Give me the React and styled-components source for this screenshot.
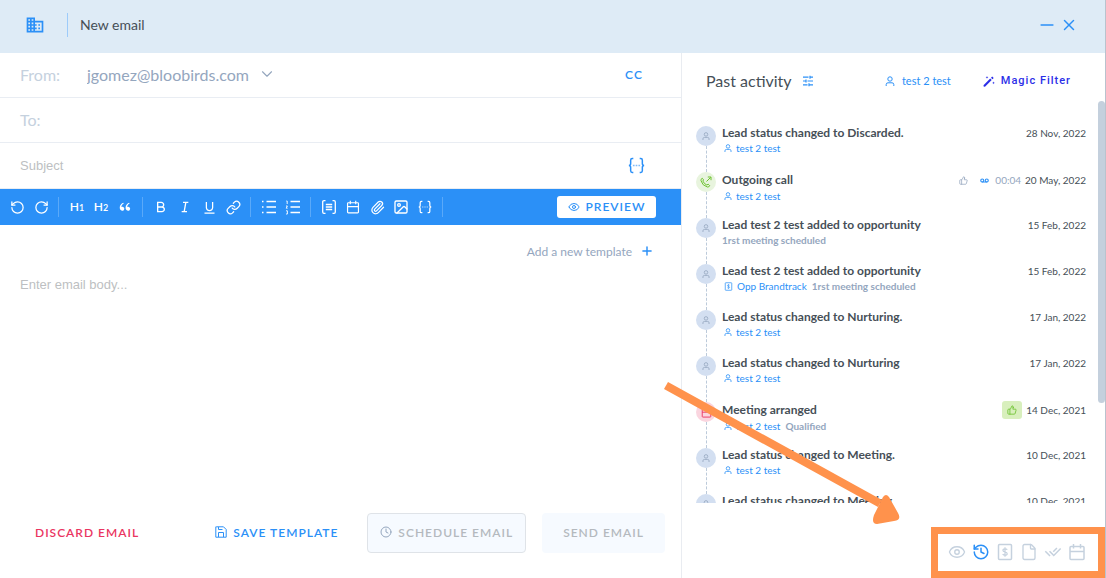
import React from 'react'
import styled, { createGlobalStyle, css } from 'styled-components'
import {
  ChevronDown, Clock, Eye, File, History, Image, Link,
  Minus, Paperclip, Plus, RotateCcw, RotateCw, ThumbsUp, Voicemail, X,
} from 'lucide-react'
import { MdBusiness } from 'react-icons/md'
import { RiBold, RiCheckDoubleLine, RiDoubleQuotesL, RiItalic, RiUnderline } from 'react-icons/ri'

const blue = '#2b90f7';
const grey = '#464f57';
const softGrey = '#94a6be';
const lightGrey = '#c5d1de';
const orange = '#ff924c';

const GlobalStyle = createGlobalStyle`
  * {
    box-sizing: border-box;
  }
  body {
    margin: 0;
    background: #ffffff;
    color: ${grey};
    font-family: Lato, sans-serif;
  }
  button, input, select, textarea {
    margin: 0;
    padding: 0;
    border: 0;
    background: none;
    color: inherit;
    font: inherit;
    outline: none;
  }
  svg {
    display: block;
    flex: none;
  }
`;

const Window = styled.div`
  position: relative;
  display: flex;
  flex-direction: column;
  height: 100vh;
  min-height: 480px;
  overflow: hidden;
  border-right: 1px solid #b9c3ce;
`;

const Header = styled.header`
  display: flex;
  align-items: center;
  height: 53px;
  flex: none;
  padding: 0 25px 4px 25px;
  background: #deebf6;
  color: ${blue};
`;

const HeaderTitle = styled.h1`
  flex: 1;
  margin: 0 0 0 22px;
  padding-left: 12px;
  border-left: 1px solid #9dcbfa;
  color: ${grey};
  font-size: 14px;
  font-weight: 400;
  line-height: 24px;
`;

const IconButton = styled.button`
  display: flex;
  align-items: center;
  justify-content: center;
  width: ${({ $size = 24 }) => $size}px;
  height: 24px;
  flex: none;
  color: ${({ $color = 'inherit' }) => $color};
`;

const Content = styled.div`
  display: grid;
  grid-template-columns: minmax(0, 1fr) 423px;
  flex: 1;
  min-height: 0;
`;

const Composer = styled.form`
  display: flex;
  flex-direction: column;
  min-height: 0;
  border-right: 1px solid #e9ecf1;
`;

const FieldRow = styled.div`
  display: flex;
  align-items: center;
  height: 45px;
  flex: none;
  padding: 0 33px 2px 20px;
  border-bottom: 1px solid #e9edf3;
`;

const SubjectRow = styled(FieldRow)`
  height: 46px;
  padding: 0 33px 0 20px;
`;

const FieldLabel = styled.label`
  width: 67px;
  color: ${lightGrey};
  font-size: 16px;
`;

const SenderSelect = styled.select`
  appearance: none;
  color: ${softGrey};
  font-size: 16px;
`;

const FieldInput = styled.input`
  flex: 1;
  min-width: 0;
  font-family: 'Liberation Sans', Arial, sans-serif;
  font-size: 13px;
  &::placeholder {
    color: #bdbfc2;
  }
`;

const Spacer = styled.div`
  flex: 1;
`;

const CcButton = styled.button`
  width: 28px;
  color: ${blue};
  font-size: 12px;
  font-weight: 600;
  letter-spacing: 1px;
`;

const Toolbar = styled.div`
  display: flex;
  align-items: center;
  height: 36px;
  flex: none;
  padding: 0 25px 0 5px;
  background: ${blue};
  color: #ffffff;
`;

const ToolGroup = styled.div`
  display: flex;
  align-items: center;
  height: 20px;
  padding-right: 5px;
  margin-right: 6px;
  border-right: 1px solid #5aa9f9;
`;

const Heading = styled.span`
  font-size: 12px;
  font-weight: 600;
  line-height: 14px;
  small {
    font-size: 9px;
  }
`;

const PreviewButton = styled.button`
  display: flex;
  align-items: center;
  justify-content: center;
  gap: 6px;
  width: 99px;
  height: 22px;
  padding-bottom: 1px;
  border-radius: 3px;
  background: #ffffff;
  color: ${blue};
  font-size: 12px;
  font-weight: 600;
  letter-spacing: 1px;
`;

const TemplateButton = styled.button`
  display: flex;
  align-items: center;
  align-self: flex-end;
  gap: 8px;
  height: 24px;
  flex: none;
  margin: 14px 27px 0 0;
  color: ${softGrey};
  font-size: 12px;
`;

const EmailBody = styled.textarea`
  flex: 1;
  min-height: 40px;
  padding: 14px 20px;
  resize: none;
  font-family: 'Liberation Sans', Arial, sans-serif;
  font-size: 13px;
  line-height: 16px;
  &::placeholder {
    color: #bdbfc2;
  }
`;

const Actions = styled.footer`
  display: flex;
  justify-content: space-between;
  flex: none;
  padding: 0 16px 25px 18px;
`;

const ActionGroup = styled.div`
  display: flex;
  gap: 16px;
`;

const filled = css`
  background: #f6faff;
  color: #b4b9be;
`;

const ActionButton = styled.button`
  display: flex;
  align-items: center;
  gap: 6px;
  height: 40px;
  padding: 0 ${({ $padding = 16 }) => $padding}px 2px;
  border: 1px solid ${({ $outlined }) => ($outlined ? '#dfe3e8' : 'transparent')};
  border-radius: 4px;
  color: ${({ $color }) => $color};
  font-size: 12px;
  font-weight: 600;
  letter-spacing: 1px;
  white-space: nowrap;
  ${({ disabled }) => disabled && filled}
`;

const Activity = styled.aside`
  display: flex;
  flex-direction: column;
  min-height: 0;
`;

const ActivityHeader = styled.div`
  display: flex;
  align-items: center;
  height: 48px;
  flex: none;
  padding: 7px 34px 0 24px;
`;

const ActivityTitle = styled.h2`
  margin: 0 4px 0 0;
  font-size: 16px;
  font-weight: 400;
  line-height: 20px;
`;

const FilterButton = styled.button`
  display: flex;
  align-items: center;
  gap: 7px;
  color: ${blue};
  font-size: 11px;
`;

const MagicButton = styled(FilterButton)`
  gap: 6px;
  margin-left: 32px;
  color: #2c2fe8;
  font-family: Roboto, sans-serif;
  font-weight: 500;
  letter-spacing: 1px;
`;

const Scroller = styled.div`
  display: flex;
  flex: 1;
  min-height: 0;
`;

const Timeline = styled.ul`
  flex: 1;
  margin: 0;
  padding: 24px 12px 0 14px;
  overflow: hidden;
  list-style: none;
`;

const ScrollThumb = styled.div`
  width: 7px;
  height: 75%;
  border-radius: 4px;
  background: #c4d0dd;
`;

const Entry = styled.li`
  display: flex;
  gap: 6px;
  height: 46px;
`;

const MarkerColumn = styled.div`
  display: flex;
  flex-direction: column;
  align-items: center;
  width: 20px;
  padding-top: 1px;
  &::after {
    content: '';
    flex: 1;
    margin-bottom: -1px;
    border-left: 1px dashed #bccada;
  }
`;

const tones = {
  status: { background: '#d3dff1', color: '#94a6be' },
  call: { background: '#e8f4de', color: '#6cc22f' },
  meeting: { background: '#fad5df', color: '#ea3561' },
};

const Marker = styled.div`
  display: flex;
  align-items: center;
  justify-content: center;
  width: 20px;
  height: 20px;
  border-radius: 50%;
  background: ${({ $kind }) => tones[$kind].background};
  color: ${({ $kind }) => tones[$kind].color};
`;

const EntryText = styled.div`
  flex: 1;
  min-width: 0;
`;

const EntryTop = styled.div`
  display: flex;
  align-items: center;
  min-height: 16px;
  white-space: nowrap;
`;

const EntryTitle = styled.h3`
  flex: 1;
  margin: 0;
  font-size: 12px;
  font-weight: 700;
  line-height: 16px;
`;

const EntryDate = styled.time`
  font-size: 10px;
  line-height: 14px;
`;

const CallInfo = styled.span`
  display: flex;
  align-items: center;
  height: 18px;
  margin-right: 4px;
  gap: 6px;
  color: ${softGrey};
  font-size: 10px;
  svg:first-child {
    margin-right: 6px;
  }
`;

const Approved = styled.span`
  display: flex;
  align-items: center;
  justify-content: center;
  width: 20px;
  height: 18px;
  margin-right: 4px;
  border-radius: 3px;
  background: #d8efbd;
  color: #6cc22f;
`;

const EntryDetails = styled.div`
  display: flex;
  align-items: center;
  gap: 5px;
  font-size: 10px;
  line-height: 14px;
`;

const EntryLink = styled.a`
  display: flex;
  align-items: center;
  gap: 4px;
  padding-left: 2px;
  color: ${blue};
  text-decoration: none;
`;

const EntryNote = styled.span`
  color: ${softGrey};
  font-weight: 700;
`;

const PanelTabs = styled.nav`
  display: flex;
  align-items: center;
  align-self: flex-end;
  height: 51px;
  flex: none;
  margin-top: 24px;
  padding: 0 9px 2px 7px;
  border: 7px solid ${orange};
  color: ${lightGrey};
`;

const Arrow = styled.svg`
  position: absolute;
  right: 203px;
  bottom: 52px;
  pointer-events: none;
`;

const Braces = ({ size = 16 }) => (
  <svg width={size} height={size} viewBox="0 0 16 16" fill="none" stroke="currentColor" strokeWidth="1.4">
    <path d="M5 1.5H4Q2.5 1.5 2.5 3V6.2Q2.5 8 .8 8Q2.5 8 2.5 9.8V13Q2.5 14.5 4 14.5H5" />
    <path d="M11 1.5H12Q13.5 1.5 13.5 3V6.2Q13.5 8 15.2 8Q13.5 8 13.5 9.8V13Q13.5 14.5 12 14.5H11" />
    <path d="M4.6 8h1.6M7.2 8h1.6M9.8 8h1.6" opacity="0.6" />
  </svg>
);

const Snippet = () => (
  <svg width="16" height="16" viewBox="0 0 16 16" fill="none" stroke="currentColor" strokeWidth="1.3">
    <path d="M4.5 1.7H3Q1.7 1.7 1.7 3V13Q1.7 14.3 3 14.3H4.5M11.5 1.7H13Q14.3 1.7 14.3 3V13Q14.3 14.3 13 14.3H11.5" />
    <path d="M4.8 5.5h6.4M4.8 8h6.4M4.8 10.5h6.4" />
  </svg>
);

const BulletList = ({ numbered }) => (
  <svg width="16" height="16" viewBox="0 0 16 16" fill="none" stroke="currentColor" strokeWidth="1.3">
    <path d="M5.5 2.5H15M5.5 8H15M5.5 13.5H15" />
    {numbered
      ? <path d="M1.3 2H2.2V5M1 7H2.4L1.2 9.2H2.6M1 11.8H2.4V15H1" strokeWidth="0.9" />
      : <path d="M1 2.5h1.5M1 8h1.5M1 13.5h1.5" />}
  </svg>
);

const Person = ({ size = 10 }) => (
  <svg width={size} height={size} viewBox="0 0 10 10" fill="none" stroke="currentColor">
    <circle cx="5" cy="3" r="2.2" />
    <path d="M1.2 10V8.5Q1.2 6.8 3 6.8H7Q8.8 6.8 8.8 8.5V10" />
  </svg>
);

const Sliders = () => (
  <svg width="12" height="12" viewBox="0 0 12 12" fill="none" stroke="currentColor" strokeWidth="1.2">
    <path d="M1 2.2h5.5M8.5 2.2H11M8 .7v3M1 6h2.5M5.5 6H11M4 4.5v3M1 9.8h4.5M7.5 9.8H11M7 8.3v3" />
  </svg>
);

const Wand = () => (
  <svg width="12" height="12" viewBox="0 0 12 12" fill="currentColor">
    <path d="M.5 10.3 7.200 3.600l1.500 1.500L2 11.800Q.2 12 .5 10.300zM8 2.800l1.200-1.200 1.500 1.500-1.200 1.200zM4 1l.4 1 1 .4-1 .4L4 3.800l-.4-1-1-.4 1-.4zM10.500 6.500l.4 1 1 .4-1 .4-.4 1-.4-1-1-.4 1-.4z" />
  </svg>
);

const Floppy = () => (
  <svg width="12" height="12" viewBox="0 0 12 12" fill="none" stroke="currentColor">
    <path d="M1.5.8h7l2.700 2.700v7.700H.8V.8zM3.500 11V6.500h5V11M3.500 1v2.500h4" />
  </svg>
);

const Bill = ({ size = 18 }) => (
  <svg width={size} height={size} viewBox="0 0 18 18" fill="none" stroke="currentColor" strokeWidth="1.5">
    <rect x="2.5" y="1.5" width="13" height="15" rx="1" />
    <path d="M11.3 6.700Q10.500 5.800 9 5.800 6.900 5.800 6.900 7.300 6.900 8.700 9 9q2.200.3 2.200 1.700 0 1.500-2.200 1.500-1.500 0-2.400-1M9 4.300v9.400" strokeWidth="1.2" />
  </svg>
);

const OutCall = () => (
  <svg width="12" height="12" viewBox="0 0 12 12" fill="none" stroke="currentColor">
    <path d="M3.4 3.400 2.200 2.300Q.6 3 1 4.700 2.200 9.500 7.300 11q1.800.3 2.400-1.300L8.200 8.200 6.800 9Q4 7.800 3 5.200zM6.500 5.500l4-4M7.800 1h3.200v3.200" />
  </svg>
);

const CalendarIcon = ({ size = 18 }) => (
  <svg width={size} height={size} viewBox="0 0 18 18" fill="none" stroke="currentColor" strokeWidth="1.5">
    <rect x="2" y="3.5" width="14" height="13" rx="1" />
    <path d="M2 8.5H16M5.5 1V5.5M12.5 1V5.5" />
  </svg>
);

const markers = {
  status: <Person size={8} />,
  call: <OutCall />,
  meeting: <CalendarIcon size={11} />,
};

const entries = [
  { kind: 'status', title: 'Lead status changed to Discarded.', date: '28 Nov, 2022', lead: 'test 2 test' },
  { kind: 'call', title: 'Outgoing call', date: '20 May, 2022', lead: 'test 2 test', duration: '00:04' },
  { kind: 'status', title: 'Lead test 2 test added to opportunity', date: '15 Feb, 2022', note: '1rst meeting scheduled' },
  { kind: 'status', title: 'Lead test 2 test added to opportunity', date: '15 Feb, 2022', opportunity: 'Opp Brandtrack', note: '1rst meeting scheduled' },
  { kind: 'status', title: 'Lead status changed to Nurturing.', date: '17 Jan, 2022', lead: 'test 2 test' },
  { kind: 'status', title: 'Lead status changed to Nurturing', date: '17 Jan, 2022', lead: 'test 2 test' },
  { kind: 'meeting', title: 'Meeting arranged', date: '14 Dec, 2021', lead: 'test 2 test', note: 'Qualified', approved: true },
  { kind: 'status', title: 'Lead status changed to Meeting.', date: '10 Dec, 2021', lead: 'test 2 test' },
  { kind: 'status', title: 'Lead status changed to Meeting', date: '10 Dec, 2021' },
];

const ActivityEntry = ({ kind, title, date, lead, opportunity, note, duration, approved }) => (
  <Entry>
    <MarkerColumn>
      <Marker $kind={kind}>{markers[kind]}</Marker>
    </MarkerColumn>
    <EntryText>
      <EntryTop>
        <EntryTitle>{title}</EntryTitle>
        {duration && (
          <CallInfo>
            <ThumbsUp size={9} />
            <Voicemail size={9} strokeWidth={3} color={blue} />
            {duration}
          </CallInfo>
        )}
        {approved && <Approved><ThumbsUp size={10} /></Approved>}
        <EntryDate>{date}</EntryDate>
      </EntryTop>
      <EntryDetails>
        {lead && <EntryLink href="#lead"><Person size={8} />{lead}</EntryLink>}
        {opportunity && <EntryLink href="#opportunity"><Bill size={9} />{opportunity}</EntryLink>}
        {note && <EntryNote>{note}</EntryNote>}
      </EntryDetails>
    </EntryText>
  </Entry>
);

const Tool = ({ label, children }) => (
  <IconButton type="button" aria-label={label}>{children}</IconButton>
);

const App = () => (
  <>
    <GlobalStyle />
    <Window>
      <Header>
        <MdBusiness size={20} />
        <HeaderTitle>New email</HeaderTitle>
        <IconButton $size={22} aria-label="Minimize"><Minus size={20} /></IconButton>
        <IconButton $size={22} aria-label="Close"><X size={18} /></IconButton>
      </Header>
      <Content>
        <Composer>
          <FieldRow>
            <FieldLabel htmlFor="from">From:</FieldLabel>
            <SenderSelect id="from">
              <option>jgomez@bloobirds.com</option>
            </SenderSelect>
            <IconButton as="span" $size={36} $color={softGrey}><ChevronDown size={18} strokeWidth={1.5} /></IconButton>
            <Spacer />
            <CcButton type="button">CC</CcButton>
          </FieldRow>
          <FieldRow>
            <FieldLabel htmlFor="to">To:</FieldLabel>
            <FieldInput id="to" />
          </FieldRow>
          <SubjectRow>
            <FieldInput aria-label="Subject" placeholder="Subject" />
            <IconButton type="button" $color={blue} aria-label="Insert variable"><Braces size={17} /></IconButton>
          </SubjectRow>
          <Toolbar>
            <ToolGroup>
              <Tool label="Undo"><RotateCcw size={15} /></Tool>
              <Tool label="Redo"><RotateCw size={15} /></Tool>
            </ToolGroup>
            <ToolGroup>
              <Tool label="Heading 1"><Heading>H<small>1</small></Heading></Tool>
              <Tool label="Heading 2"><Heading>H<small>2</small></Heading></Tool>
              <Tool label="Quote"><RiDoubleQuotesL size={14} /></Tool>
            </ToolGroup>
            <ToolGroup>
              <Tool label="Bold"><RiBold size={16} /></Tool>
              <Tool label="Italic"><RiItalic size={16} /></Tool>
              <Tool label="Underline"><RiUnderline size={15} /></Tool>
              <Tool label="Link"><Link size={15} /></Tool>
            </ToolGroup>
            <ToolGroup>
              <Tool label="Bulleted list"><BulletList /></Tool>
              <Tool label="Numbered list"><BulletList numbered /></Tool>
            </ToolGroup>
            <ToolGroup>
              <Tool label="Snippet"><Snippet /></Tool>
              <Tool label="Calendar"><CalendarIcon size={14} /></Tool>
              <Tool label="Attach file"><Paperclip size={15} /></Tool>
              <Tool label="Insert image"><Image size={16} /></Tool>
              <Tool label="Variable"><Braces size={14} /></Tool>
            </ToolGroup>
            <Spacer />
            <PreviewButton type="button"><Eye size={12} />PREVIEW</PreviewButton>
          </Toolbar>
          <TemplateButton type="button">Add a new template <Plus size={14} color={blue} strokeWidth={2.5} /></TemplateButton>
          <EmailBody aria-label="Email body" placeholder="Enter email body..." />
          <Actions>
            <ActionButton type="button" $color="#ea3561">DISCARD EMAIL</ActionButton>
            <ActionGroup>
              <ActionButton type="button" $color={blue} $padding={12}><Floppy />SAVE TEMPLATE</ActionButton>
              <ActionButton type="button" disabled $outlined $padding={12}><Clock size={12} color={softGrey} />SCHEDULE EMAIL</ActionButton>
              <ActionButton type="submit" disabled $padding={20}>SEND EMAIL</ActionButton>
            </ActionGroup>
          </Actions>
        </Composer>
        <Activity>
          <ActivityHeader>
            <ActivityTitle>Past activity</ActivityTitle>
            <IconButton $color={blue} aria-label="Filter activity"><Sliders /></IconButton>
            <Spacer />
            <FilterButton><Person />test 2 test</FilterButton>
            <MagicButton><Wand />Magic Filter</MagicButton>
          </ActivityHeader>
          <Scroller>
            <Timeline>
              {entries.map((entry, index) => <ActivityEntry key={index} {...entry} />)}
            </Timeline>
            <ScrollThumb />
          </Scroller>
          <PanelTabs>
            <IconButton aria-label="Overview"><Eye size={18} strokeWidth={1.8} /></IconButton>
            <IconButton $color={blue} aria-label="Past activity"><History size={18} /></IconButton>
            <IconButton aria-label="Opportunities"><Bill /></IconButton>
            <IconButton aria-label="Documents"><File size={18} strokeWidth={1.8} /></IconButton>
            <IconButton aria-label="Tasks"><RiCheckDoubleLine size={18} /></IconButton>
            <IconButton aria-label="Calendar"><CalendarIcon /></IconButton>
          </PanelTabs>
        </Activity>
      </Content>
      <Arrow width="238" height="144" viewBox="0 0 238 144" fill={orange}>
        <path d="M4 0 218 118 214 125 0 7z" />
        <path d="M225 115Q222 111 219 115L210 133Q207 142 213 142L230 139Q238 138 234 131z" />
      </Arrow>
    </Window>
  </>
);

export default App;
